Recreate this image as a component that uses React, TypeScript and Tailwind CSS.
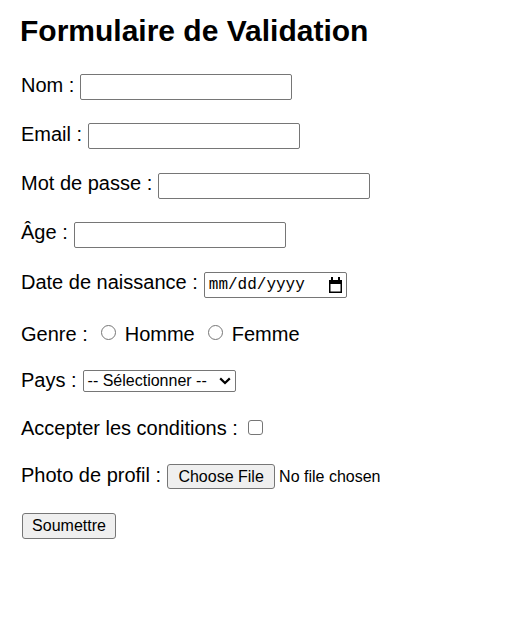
import React from "react";

const Row = ({ className, children }: any) => {
  return (
    <div className={"flex items-center text-[20px] leading-[23px] " + className}>
      {children}
    </div>
  );
};

const TextInput = ({ type }: any) => {
  return (
    <input
      type={type}
      className="ml-[6px] h-[26px] w-[212px] rounded-[2px] border border-[#767676] bg-white px-[3px] text-[16px] outline-none"
    />
  );
};

const Radio = ({ className }: any) => {
  return (
    <span
      className={
        "mb-[3px] inline-block h-[15px] w-[15px] shrink-0 rounded-full border border-[#767676] bg-white " +
        className
      }
    />
  );
};

const CalendarIcon = () => {
  return (
    <svg width="15" height="16" viewBox="0 0 15 16" className="shrink-0">
      <rect x="3" y="0" width="2" height="4" fill="#000" />
      <rect x="10" y="0" width="2" height="4" fill="#000" />
      <rect x="1" y="3" width="13" height="4" fill="#000" />
      <rect x="1.75" y="3.75" width="11.5" height="11.5" fill="none" stroke="#000" strokeWidth="1.5" />
    </svg>
  );
};

const Chevron = () => {
  return (
    <svg width="12" height="8" viewBox="0 0 12 8" className="shrink-0">
      <path d="M1.2 1.4 L6 6 L10.8 1.4" fill="none" stroke="#000" strokeWidth="2.2" />
    </svg>
  );
};

export default function App() {
  return (
    <div className="min-h-screen bg-white px-5 font-['Liberation_Sans',Arial,sans-serif] text-black">
      <h2 className="pt-[14px] text-[30px] font-bold leading-[34px]">Formulaire de Validation</h2>

      <form className="ml-[1px]">
        <Row className="mt-[26px] h-[26px]">
          <span className="mb-[4px]">Nom :</span>
          <TextInput type="text" />
        </Row>

        <Row className="mt-[23px] h-[26px]">
          <span className="mb-[4px]">Email :</span>
          <TextInput type="email" />
        </Row>

        <Row className="mt-[24px] h-[26px]">
          <span className="mb-[5px]">Mot de passe :</span>
          <TextInput type="password" />
        </Row>

        <Row className="mt-[23px] h-[26px]">
          <span className="mb-[5px]">Âge :</span>
          <TextInput type="number" />
        </Row>

        <Row className="mt-[24px] h-[26px]">
          <span className="mb-[5px]">Date de naissance :</span>
          <div className="ml-[6px] flex h-[26px] w-[143px] items-center justify-between rounded-[2px] border border-[#767676] bg-white pl-[4px] pr-[3px]">
            <span className="font-['Liberation_Mono',monospace] text-[16px] leading-[20px]">mm/dd/yyyy</span>
            <CalendarIcon />
          </div>
        </Row>

        <Row className="mt-[23px] h-[26px]">
          <span>Genre :</span>
          <Radio className="ml-[13px]" />
          <span className="ml-[9px]">Homme</span>
          <Radio className="ml-[13px]" />
          <span className="ml-[9px]">Femme</span>
        </Row>

        <Row className="mt-[21px] h-[26px]">
          <span className="mb-[2px]">Pays :</span>
          <div className="ml-[6px] flex h-[22px] w-[153px] items-center justify-between rounded-[2px] border border-[#767676] bg-white pl-[4px] pr-[4px]">
            <span className="text-[16px] leading-[18px]">-- Sélectionner --</span>
            <Chevron />
          </div>
        </Row>

        <Row className="mt-[21px] h-[26px]">
          <span>Accepter les conditions :</span>
          <span className="mb-[2px] ml-[10px] inline-block h-[15px] w-[15px] rounded-[3px] border border-[#767676] bg-white" />
        </Row>

        <Row className="mt-[23px] h-[25px]">
          <span className="mb-[3px]">Photo de profil :</span>
          <button
            type="button"
            className="ml-[6px] h-[25px] w-[108px] rounded-[3px] border border-[#767676] bg-[#efefef] text-[16px] leading-[18px]"
          >
            Choose File
          </button>
          <span className="ml-[4px] text-[16px] leading-[18px]">No file chosen</span>
        </Row>

        <div className="mt-[24px] flex">
          <button
            type="submit"
            className="ml-[1px] h-[26px] w-[94px] rounded-[3px] border border-[#767676] bg-[#efefef] text-[16px] leading-[18px]"
          >
            Soumettre
          </button>
        </div>
      </form>
    </div>
  );
}
